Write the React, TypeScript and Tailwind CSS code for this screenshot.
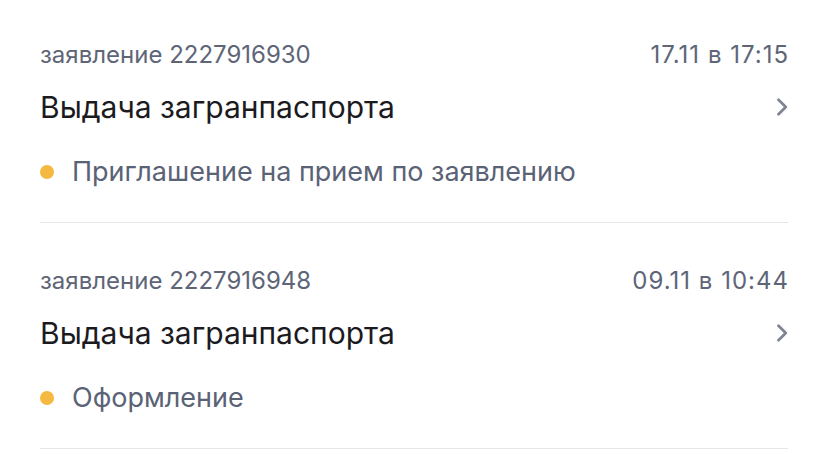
import React from "react";

const items = [
  {
    number: "2227916930",
    date: "17.11 в 17:15",
    title: "Выдача загранпаспорта",
    status: "Приглашение на прием по заявлению",
  },
  {
    number: "2227916948",
    date: "09.11 в 10:44",
    title: "Выдача загранпаспорта",
    status: "Оформление",
  },
];

const Chevron = () => (
  <svg width="12" height="18" viewBox="0 0 12 18" fill="none">
    <path
      d="M2.5 1.8 L9.8 9 L2.5 16.2"
      stroke="#7f8494"
      strokeWidth="2.7"
      strokeLinecap="round"
      strokeLinejoin="round"
    />
  </svg>
);

export default function App() {
  return (
    <div
      className="min-h-screen w-full bg-white px-10"
      style={{ fontFamily: "Inter, 'Noto Sans', sans-serif" }}
    >
      <div className="w-[748px]">
        {items.map((item, index) => (
          <div
            key={index}
            className="border-b border-[#e5e6e8] pt-[44px] pb-[34px] first:pt-[41px]"
          >
            {/* header */}
            <div className="flex items-center justify-between text-[24px] leading-[28px] text-[#5e6577]">
              <span>заявление {item.number}</span>
              <span className="tracking-[1px] -mr-[1px]">{item.date}</span>
            </div>

            {/* title */}
            <div className="mt-[20px] flex items-center justify-between">
              <span className="text-[30px] leading-[36px] text-[#1b1b1f]">
                {item.title}
              </span>
              <Chevron />
            </div>

            {/* status */}
            <div className="mt-[31px] flex items-center gap-[18px]">
              <span className="h-[14px] w-[14px] rounded-full bg-[#f5b841]" />
              <span className="text-[27px] leading-[32px] text-[#5a6275]">
                {item.status}
              </span>
            </div>
          </div>
        ))}
      </div>
    </div>
  );
}
